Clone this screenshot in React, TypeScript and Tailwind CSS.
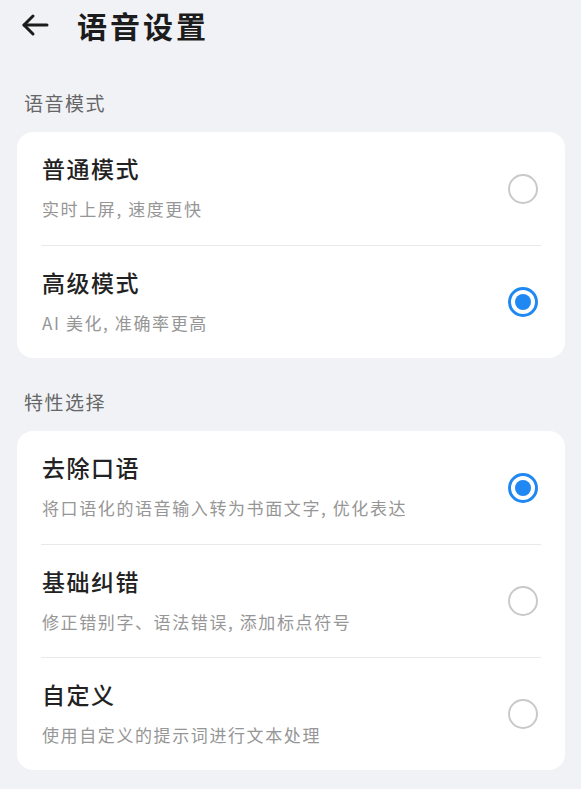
import React from "react";

type Item = { title: string; desc: string; checked: boolean };

const font = { fontFamily: '"Noto Sans CJK SC", "Noto Sans", sans-serif' };

function Radio({ checked }: { checked: boolean }) {
  if (checked) {
    return (
      <div className="w-[30px] h-[30px] rounded-full border-[3px] border-[#1f88f2] flex items-center justify-center shrink-0 mr-[3px]">
        <div className="w-[16px] h-[16px] rounded-full bg-[#1f88f2]" />
      </div>
    );
  }
  return <div className="w-[30px] h-[30px] rounded-full border-[2.5px] border-[#c9c9c9] shrink-0 mr-[3px]" />;
}

function Card({ items }: { items: Item[] }) {
  return (
    <div className="ml-[17px] mr-[16px] bg-white rounded-[16px] px-[24px]">
      {items.map((it, i) => (
        <div
          key={it.title}
          className={
            "flex items-center justify-between h-[113px] " +
            (i > 0 ? "border-t border-[#e9e9ec]" : "")
          }
        >
          <div className="flex flex-col pl-[1px] pb-[3px]">
            <div className="text-[23px] leading-[28px] font-medium text-[#222222] tracking-[1.5px]">{it.title}</div>
            <div className="mt-[16px] text-[17px] leading-[22px] text-[#969696] tracking-[1.6px]">{it.desc}</div>
          </div>
          <Radio checked={it.checked} />
        </div>
      ))}
    </div>
  );
}

export default function App() {
  const mode: Item[] = [
    { title: "普通模式", desc: "实时上屏, 速度更快", checked: false },
    { title: "高级模式", desc: "AI 美化, 准确率更高", checked: true },
  ];
  const feat: Item[] = [
    { title: "去除口语", desc: "将口语化的语音输入转为书面文字, 优化表达", checked: true },
    { title: "基础纠错", desc: "修正错别字、语法错误, 添加标点符号", checked: false },
    { title: "自定义", desc: "使用自定义的提示词进行文本处理", checked: false },
  ];
  return (
    <div className="min-h-[789px] bg-[#f1f2f6] pb-[18px]" style={font}>
      <div className="h-[50px] flex items-center">
        <svg width="28" height="24" viewBox="0 0 28 24" className="ml-[21px]" fill="none" stroke="#1c1c1c" strokeWidth="3" strokeLinecap="round" strokeLinejoin="round">
          <path d="M3 12H26" />
          <path d="M12 3L3 12L12 21" />
        </svg>
        <div className="ml-[28px] text-[30px] leading-[40px] font-bold text-[#1c1c1c] tracking-[3px]">语音设置</div>
      </div>
      <div className="pt-[39px] pl-[24px] text-[19px] leading-[28px] text-[#666666] tracking-[1.5px]">语音模式</div>
      <div className="mt-[15px]">
        <Card items={mode} />
      </div>
      <div className="pt-[30px] pl-[24px] text-[19px] leading-[28px] text-[#666666] tracking-[1.5px]">特性选择</div>
      <div className="mt-[15px]">
        <Card items={feat} />
      </div>
    </div>
  );
}
